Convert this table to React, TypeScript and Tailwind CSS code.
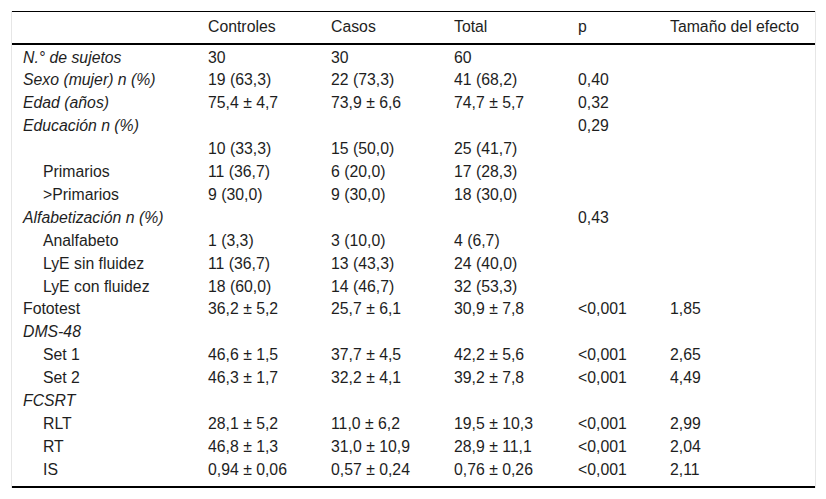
import React from 'react';

type Row = {
  label: string;
  italic?: boolean;
  indent?: boolean;
  cells: string[];
};

const rows: Row[] = [
  { label: 'N.° de sujetos', italic: true, cells: ['30', '30', '60', '', ''] },
  { label: 'Sexo (mujer) n (%)', italic: true, cells: ['19 (63,3)', '22 (73,3)', '41 (68,2)', '0,40', ''] },
  { label: 'Edad (años)', italic: true, cells: ['75,4 ± 4,7', '73,9 ± 6,6', '74,7 ± 5,7', '0,32', ''] },
  { label: 'Educación n (%)', italic: true, cells: ['', '', '', '0,29', ''] },
  { label: '', indent: true, cells: ['10 (33,3)', '15 (50,0)', '25 (41,7)', '', ''] },
  { label: 'Primarios', indent: true, cells: ['11 (36,7)', '6 (20,0)', '17 (28,3)', '', ''] },
  { label: '>Primarios', indent: true, cells: ['9 (30,0)', '9 (30,0)', '18 (30,0)', '', ''] },
  { label: 'Alfabetización n (%)', italic: true, cells: ['', '', '', '0,43', ''] },
  { label: 'Analfabeto', indent: true, cells: ['1 (3,3)', '3 (10,0)', '4 (6,7)', '', ''] },
  { label: 'LyE sin fluidez', indent: true, cells: ['11 (36,7)', '13 (43,3)', '24 (40,0)', '', ''] },
  { label: 'LyE con fluidez', indent: true, cells: ['18 (60,0)', '14 (46,7)', '32 (53,3)', '', ''] },
  { label: 'Fototest', cells: ['36,2 ± 5,2', '25,7 ± 6,1', '30,9 ± 7,8', '<0,001', '1,85'] },
  { label: 'DMS-48', italic: true, cells: ['', '', '', '', ''] },
  { label: 'Set 1', indent: true, cells: ['46,6 ± 1,5', '37,7 ± 4,5', '42,2 ± 5,6', '<0,001', '2,65'] },
  { label: 'Set 2', indent: true, cells: ['46,3 ± 1,7', '32,2 ± 4,1', '39,2 ± 7,8', '<0,001', '4,49'] },
  { label: 'FCSRT', italic: true, cells: ['', '', '', '', ''] },
  { label: 'RLT', indent: true, cells: ['28,1 ± 5,2', '11,0 ± 6,2', '19,5 ± 10,3', '<0,001', '2,99'] },
  { label: 'RT', indent: true, cells: ['46,8 ± 1,3', '31,0 ± 10,9', '28,9 ± 11,1', '<0,001', '2,04'] },
  { label: 'IS', indent: true, cells: ['0,94 ± 0,06', '0,57 ± 0,24', '0,76 ± 0,26', '<0,001', '2,11'] },
];

const headers = ['Controles', 'Casos', 'Total', 'p', 'Tamaño del efecto'];

export default function App() {
  return (
    <div className="w-[826px] h-[499px] bg-white pt-[11px] pl-[11px] font-['Liberation_Sans',Arial,sans-serif] text-[15.8px] text-[#1e1e1e]">
      <div className="w-[805px] border-x border-[#e6e6e6]">
        <table className="w-full table-fixed border-collapse border-t border-b-2 border-black">
          <colgroup>
            <col className="w-[185px]" />
            <col className="w-[123px]" />
            <col className="w-[123px]" />
            <col className="w-[124px]" />
            <col className="w-[92px]" />
            <col />
          </colgroup>
          <thead>
            <tr className="h-[32px] border-b-2 border-black">
              <th />
              {headers.map((h) => (
                <th key={h} className="text-left font-normal pl-[11px] whitespace-nowrap">
                  {h}
                </th>
              ))}
            </tr>
          </thead>
          <tbody>
            <tr className="h-[3px]">
              <td colSpan={6} className="p-0" />
            </tr>
            {rows.map((r, i) => (
              <tr key={i} className={i === rows.length - 1 ? 'h-[28px] align-top' : 'h-[22.9px]'}>
                <td
                  className={`leading-[22.9px] whitespace-nowrap ${r.indent ? 'pl-[31px]' : 'pl-[11px]'} ${r.italic ? 'italic' : ''}`}
                >
                  {r.label}
                </td>
                {r.cells.map((c, j) => (
                  <td key={j} className="leading-[22.9px] pl-[11px] whitespace-nowrap">
                    {c}
                  </td>
                ))}
              </tr>
            ))}
          </tbody>
        </table>
      </div>
    </div>
  );
}
